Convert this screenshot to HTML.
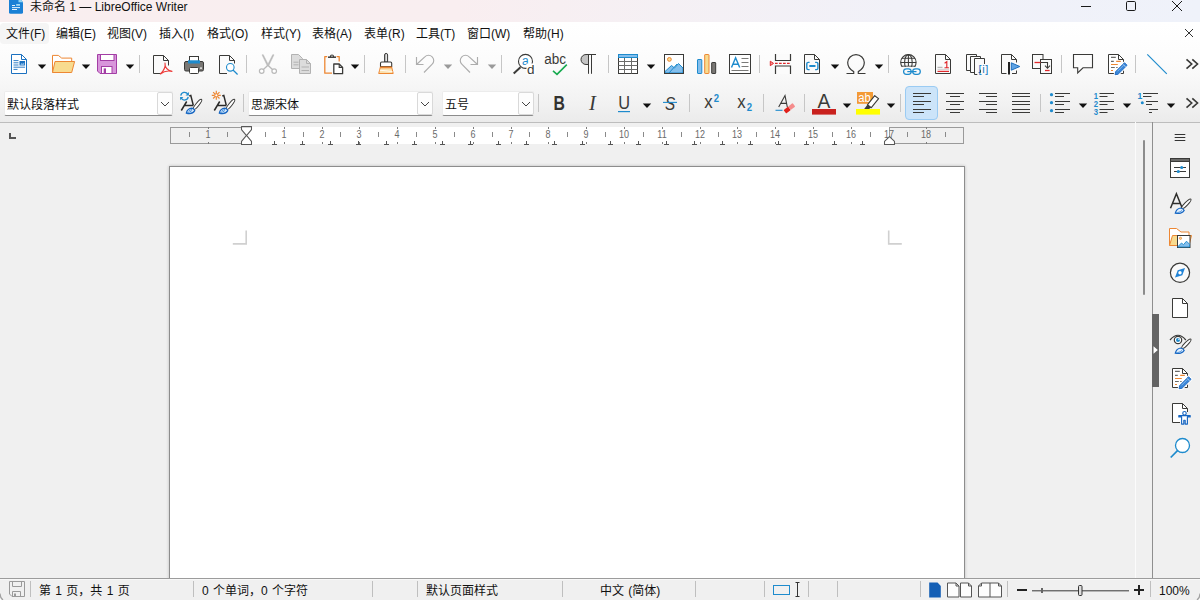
<!DOCTYPE html>
<html lang="zh-CN"><head><meta charset="utf-8"><title>未命名 1 — LibreOffice Writer</title>
<style>
html,body{margin:0;padding:0;}
body{width:1200px;height:600px;overflow:hidden;position:relative;background:#f0f0f0;
 font-family:"Liberation Sans","Noto Sans CJK SC",sans-serif;font-size:12px;color:#1a1a1a;}
.abs{position:absolute;}
#title{left:0;top:0;width:1200px;height:22px;background:linear-gradient(90deg,#f9eeef 0%,#f9eef0 38%,#f5f0f4 55%,#f1f1f8 75%,#eff2fa 100%);}
#bars{left:0;top:22px;width:1200px;height:100px;background:linear-gradient(180deg,#ffffff 0px,#fefefe 18px,#fcfcfc 36px,#f9f9f9 52px,#f6f6f6 64px,#f2f2f2 80px,#ebebeb 100px);}
#barline{left:0;top:122px;width:1200px;height:1px;background:#bdbdbd;}
.t{position:absolute;white-space:nowrap;line-height:16px;height:16px;}
.mi{position:absolute;top:26px;white-space:nowrap;line-height:16px;height:16px;font-size:12px;color:#111;}
svg{position:absolute;overflow:visible;}
.sep{position:absolute;width:1px;background:#c6c6c6;}
.st{position:absolute;top:583px;word-spacing:1px;white-space:nowrap;line-height:16px;height:16px;font-size:12px;color:#111;}
.ssep{position:absolute;top:581px;height:16px;width:1px;background:#bfbfbf;}
.rn{position:absolute;top:128px;width:20px;text-align:center;font-size:10px;transform:scaleX(.9);line-height:14px;color:#6a6a6a;}
</style></head>
<body>
<div id="title" class="abs"></div>
<svg style="left:9px;top:0" width="14" height="14" viewBox="0 0 14 14"><path d="M0 0H12.300L14 2.300V12.200a1.600 1.600 0 0 1-1.600 1.600H1.600A1.600 1.600 0 0 1 0 12.200z" fill="#1b80d5"/><path d="M9.500 0h2.800L14 2.300H9.500z" fill="#8fd3f4"/><rect x="3" y="5" width="3" height=".9" fill="#fff"/><rect x="7.200" y="4" width="3.800" height="1.800" fill="#9fd8f6"/><rect x="3" y="7.200" width="8" height=".9" fill="#fff"/><rect x="3" y="9.100" width="5" height=".9" fill="#fff"/></svg>
<div class="t" style="left:30px;top:-1px;font-size:12px;color:#111">未命名 1 — LibreOffice Writer</div>
<svg style="left:1076px;top:0" width="124" height="22" viewBox="0 0 124 22" fill="none" stroke="#1a1a1a" stroke-width="1"><path d="M5 6.5h10"/><rect x="50.5" y="1.5" width="9" height="9" rx="1.2"/><path d="M96 1l10 10M106 1l-10 10"/></svg>
<div id="bars" class="abs"></div><div id="barline" class="abs"></div>
<div class="abs" style="left:0;top:23px;width:49px;height:21px;background:#f5f5f5;border-radius:4px"></div>
<div class="mi" style="left:6px">文件(F)</div><div class="mi" style="left:56px">编辑(E)</div><div class="mi" style="left:107px">视图(V)</div><div class="mi" style="left:159px">插入(I)</div><div class="mi" style="left:207px">格式(O)</div><div class="mi" style="left:261px">样式(Y)</div><div class="mi" style="left:312px">表格(A)</div><div class="mi" style="left:364px">表单(R)</div><div class="mi" style="left:416px">工具(T)</div><div class="mi" style="left:467px">窗口(W)</div><div class="mi" style="left:523px">帮助(H)</div>
<svg style="left:1184px;top:28px" width="10" height="10" viewBox="0 0 10 10" stroke="#333" stroke-width="1" fill="none"><path d="M1 1l8 8M9 1l-8 8"/></svg>
<svg style="left:7px;top:52px" width="24" height="24" viewBox="0 0 24 24" ><path d="M4.5 2.5h10l5 5v14h-15z" fill="#fff" stroke="#1c71c0"/><path d="M14.5 2.5v5h5" fill="none" stroke="#1c71c0"/><path d="M6.500 8.600h5M6.500 10.800h5M6.500 13h5M6.500 15.200h11.500M6.500 17.400h4" stroke="#1c71c0" stroke-width=".9" fill="none"/><rect x="12.500" y="9" width="5.500" height="4.500" fill="#1c71c0"/><path d="M13.300 12.800l1.500-1.700 1 .9 1.400-1.400v2.200z" fill="#9cc8ee"/></svg>
<svg style="left:37px;top:64px" width="10" height="6" viewBox="0 0 10 6"><path d="M0.8 0.4h8.4L5 5z" fill="#111"/></svg>
<svg style="left:51px;top:52px" width="24" height="24" viewBox="0 0 24 24" ><path d="M1.500 20.500V3.400h5.800l3.400 2.700h10v3.400" fill="#fff" stroke="#ed8733" stroke-linejoin="round"/><path d="M4 9.500H23.600L20.700 20.500H1.500z" fill="#f8db8f" stroke="#ed8733" stroke-linejoin="round"/></svg>
<svg style="left:81px;top:64px" width="10" height="6" viewBox="0 0 10 6"><path d="M0.8 0.4h8.4L5 5z" fill="#111"/></svg>
<svg style="left:95px;top:52px" width="24" height="24" viewBox="0 0 24 24" ><path d="M2.5 2.5h19v19H5l-2.5-2.5z" fill="#d896db" stroke="#a33ea5"/><rect x="5.5" y="2.5" width="13.5" height="6" fill="#fff" stroke="#a33ea5"/><rect x="6.5" y="14.5" width="10.5" height="7" fill="#fff" stroke="#a33ea5"/><rect x="8.7" y="16.4" width="2.3" height="5" fill="#a33ea5"/></svg>
<svg style="left:125px;top:64px" width="10" height="6" viewBox="0 0 10 6"><path d="M0.8 0.4h8.4L5 5z" fill="#111"/></svg>
<div class="sep" style="left:139px;top:55px;height:18px"></div>
<svg style="left:149px;top:52px" width="24" height="24" viewBox="0 0 24 24" ><path d="M12 21.500H4.500v-18h10l5 5v5" fill="#fafafa" stroke="#3a3a38"/><path d="M14.500 3.500v5h5" fill="none" stroke="#3a3a38"/><path d="M16 11c.6 3.5-1 7.5-4.6 11M16 11c-.2 4 2.5 7.3 7 8.400M11.400 22c3.200-2.600 7.100-3.700 11.600-2.600" fill="none" stroke="#ed3d3b" stroke-width="1.100" stroke-linecap="round"/></svg>
<svg style="left:182px;top:52px" width="24" height="24" viewBox="0 0 24 24" ><rect x="2.500" y="9.500" width="19" height="9.500" rx="1.500" fill="#797774" stroke="#3a3a38"/><rect x="7.500" y="4.500" width="9" height="5" fill="#fff" stroke="#3a3a38"/><rect x="6" y="8.300" width="12" height="3.200" fill="#1e8bcd"/><rect x="7.500" y="15.500" width="9" height="6" rx="1" fill="#fff" stroke="#3a3a38"/><rect x="18" y="15.500" width="2" height="1.200" fill="#fff"/></svg>
<svg style="left:215px;top:52px" width="24" height="24" viewBox="0 0 24 24" ><path d="M12 21.500H4.500v-18h10l5 5v3" fill="#fafafa" stroke="#3a3a38"/><path d="M14.500 3.500v5h5" fill="none" stroke="#3a3a38"/><circle cx="15.300" cy="15.300" r="3.800" fill="#fff" stroke="#1e8bcd" stroke-width="1.100"/><path d="M18 18l4.600 4.500" stroke="#1e8bcd" stroke-width="1.200"/></svg>
<div class="sep" style="left:246px;top:55px;height:18px"></div>
<svg style="left:256px;top:52px" width="24" height="24" viewBox="0 0 24 24" ><path d="M6 2.800L7.300 2.700 12.600 13.300 11.300 13.800zM18 2.800L16.700 2.700 11.400 13.300 12.700 13.800z" fill="#b9b9b9" stroke="#b9b9b9" stroke-width=".5"/><path d="M11.900 13.200L16.500 17.500M11.900 13.200L7.400 17.500" stroke="#b9b9b9" stroke-width="1.300" fill="none"/><circle cx="5.700" cy="19.100" r="2.300" fill="#fff" stroke="#b9b9b9" stroke-width="1.200"/><circle cx="18.200" cy="19.100" r="2.300" fill="#fff" stroke="#b9b9b9" stroke-width="1.200"/></svg>
<svg style="left:289px;top:52px" width="24" height="24" viewBox="0 0 24 24" ><path d="M2.500 2.500h7l4 4v10h-11z" fill="#dcdcdc" stroke="#b2b2b2"/><path d="M4.500 10.200h5M4.500 12.800h5" stroke="#b2b2b2"/><path d="M10.500 7.500h7l4 4v10h-11z" fill="#dcdcdc" stroke="#b2b2b2"/><path d="M17.500 7.500v4h4" fill="none" stroke="#b2b2b2"/><path d="M12.500 15h7.500M12.500 18.500h7.500" stroke="#b2b2b2"/></svg>
<svg style="left:321px;top:52px" width="24" height="24" viewBox="0 0 24 24" ><path d="M6.200 4.600H3.800V21.200H11M15.600 4.600H18.200V9.500" fill="none" stroke="#ed8733" stroke-width="1.300" stroke-linejoin="round"/><path d="M9.400 4.900a1.600 1.900 0 0 1 3.200 0" fill="#fff" stroke="#3a3a38" stroke-width="1.100"/><path d="M7 5.200h8" stroke="#3a3a38" stroke-width="1.500"/><path d="M12.800 12h5.400l3.400 3.400v6.300h-8.800z" fill="#fff" stroke="#3a3a38" stroke-width="1.300" stroke-linejoin="round"/><path d="M18.200 12v3.400h3.400" fill="none" stroke="#3a3a38" stroke-width="1.100"/></svg>
<svg style="left:350px;top:64px" width="10" height="6" viewBox="0 0 10 6"><path d="M0.8 0.4h8.4L5 5z" fill="#111"/></svg>
<div class="sep" style="left:364px;top:55px;height:18px"></div>
<svg style="left:373.5px;top:52px" width="24" height="24" viewBox="0 0 24 24" ><defs><linearGradient id="hg" x1="0" x2="1"><stop offset="0" stop-color="#8a8a8a"/><stop offset=".55" stop-color="#f4f4f4"/><stop offset="1" stop-color="#9a9a9a"/></linearGradient></defs><path d="M10.600 10V3a1.500 1.600 0 0 1 3 0v7z" fill="url(#hg)" stroke="#3a3a38"/><path d="M6.500 14.500V11.200q0-1.200 1.200-1.200h8.800q1.200 0 1.200 1.200V14.500z" fill="#fff" stroke="#3a3a38" stroke-width="1.100"/><path d="M6.400 15h11.300l1.500 6.500H4.700z" fill="#fbe0ad" stroke="#ed8733" stroke-linejoin="round"/><path d="M6.300 15.600h11.500" stroke="#ed8733" stroke-width="1.400"/><path d="M5.800 18.200l12.600 1.300" stroke="#fff" stroke-width=".9"/></svg>
<div class="sep" style="left:405px;top:55px;height:18px"></div>
<svg style="left:413px;top:52px" width="24" height="24" viewBox="0 0 24 24" ><path d="M3.500 5v7.500h7M3.500 12.500L11.800 4.800A5.200 5.200 0 0 1 19.200 12.200L11 20.500" fill="none" stroke="#adadad" stroke-width="1.150"/></svg>
<svg style="left:443px;top:64px" width="10" height="6" viewBox="0 0 10 6"><path d="M0.8 0.4h8.4L5 5z" fill="#9a9a9a"/></svg>
<svg style="left:457px;top:52px" width="24" height="24" viewBox="0 0 24 24" ><g transform="translate(24,0) scale(-1,1)"><path d="M3.500 5v7.500h7M3.500 12.500L11.800 4.800A5.200 5.200 0 0 1 19.200 12.200L11 20.500" fill="none" stroke="#adadad" stroke-width="1.150"/></g></svg>
<svg style="left:487px;top:64px" width="10" height="6" viewBox="0 0 10 6"><path d="M0.8 0.4h8.4L5 5z" fill="#9a9a9a"/></svg>
<div class="sep" style="left:501px;top:55px;height:18px"></div>
<svg style="left:511px;top:52px" width="24" height="24" viewBox="0 0 24 24" ><circle cx="14.500" cy="9.400" r="7" fill="#fff" stroke="#3a3a38" stroke-width="1.100"/><path d="M9.500 15.200L2.700 21.400" stroke="#3a3a38" stroke-width="2"/><text x="11" y="12.700" font-family="Liberation Sans, sans-serif" font-size="12" fill="#1e8bcd">a</text><rect x="15.500" y="11.500" width="9" height="11" fill="#fff"/><text x="16" y="22" font-family="Liberation Sans, sans-serif" font-size="13.500" fill="#3a3a38">d</text></svg>
<svg style="left:544px;top:52px" width="24" height="24" viewBox="0 0 24 24" ><text x="0.300" y="11.800" font-family="Liberation Sans, sans-serif" font-size="14" fill="#3a3a38" textLength="21.800" lengthAdjust="spacingAndGlyphs">abc</text><path d="M9 18.800l4 3.500 9.800-9.700" fill="none" stroke="#18ab50" stroke-width="1.600"/></svg>
<svg style="left:576px;top:52px" width="24" height="24" viewBox="0 0 24 24" ><path d="M12.500 2.500H10a5 5 0 0 0 0 10h2.500z" fill="#c4c4c4" stroke="#3a3a38"/><path d="M12.500 2.500v19.300M15.500 2.500v19.300M10 2.500h10" fill="none" stroke="#3a3a38" stroke-width="1"/></svg>
<div class="sep" style="left:608px;top:55px;height:18px"></div>
<svg style="left:616px;top:52px" width="24" height="24" viewBox="0 0 24 24" ><rect x="2.500" y="2.500" width="19" height="19" fill="#fff" stroke="#3a3a38"/><path d="M2.500 9.500h19M2.500 13.500h19M2.500 17.500h19M8.500 5.500v16M15.500 5.500v16" stroke="#6b6b69" fill="none"/><rect x="2.500" y="2.500" width="19" height="3" fill="#83beec" stroke="#1e8bcd"/></svg>
<svg style="left:646px;top:64px" width="10" height="6" viewBox="0 0 10 6"><path d="M0.8 0.4h8.4L5 5z" fill="#111"/></svg>
<svg style="left:662px;top:52px" width="24" height="24" viewBox="0 0 24 24" ><rect x="2.500" y="2.500" width="19" height="19" fill="#fff" stroke="#3a3a38"/><circle cx="7.400" cy="7.400" r="1.900" fill="#f8db8f" stroke="#ed8733"/><path d="M3 19.500l6.500-6 3 2.500 4-4.500 4.500 4.500v5h-18z" fill="#83beec" stroke="#1e8bcd" stroke-linejoin="round"/><path d="M7 21l8-9" stroke="#1e8bcd" fill="none"/><rect x="2.500" y="2.500" width="19" height="19" fill="none" stroke="#3a3a38"/></svg>
<svg style="left:694px;top:52px" width="24" height="24" viewBox="0 0 24 24" ><rect x="3.500" y="7.500" width="4.300" height="14" rx=".5" fill="#83beec" stroke="#1e8bcd"/><rect x="10.700" y="2.500" width="4.300" height="19" rx=".5" fill="#f8db8f" stroke="#ed8733"/><rect x="17.700" y="10.500" width="4" height="11" rx=".5" fill="#797774" stroke="#3a3a38"/></svg>
<svg style="left:728px;top:52px" width="24" height="24" viewBox="0 0 24 24" ><rect x="1.500" y="2.500" width="21" height="19" fill="#fff" stroke="#3a3a38"/><path d="M3.500 15.500L7.600 5.800l4.100 9.700M5 12.300h5.200" fill="none" stroke="#1e8bcd" stroke-width="1.450"/><path d="M13.500 6.500h7M13.500 10.500h7M13.500 14.500h7M3.500 18.500h17" stroke="#7a7a78" fill="none"/></svg>
<div class="sep" style="left:759px;top:55px;height:18px"></div>
<svg style="left:768px;top:52px" width="24" height="24" viewBox="0 0 24 24" ><path d="M7.500 2v6.500h15V2z" fill="#fbfbfb" stroke="none"/><path d="M7.500 22v-8h15v8z" fill="#fbfbfb" stroke="none"/><path d="M7.500 2v6.500h15V2M7.500 22v-8h15v8" fill="none" stroke="#3a3a38" stroke-width="1.200"/><path d="M7 11.400h16" stroke="#e0282c" stroke-width="1.300" stroke-dasharray="2.700 1.300" fill="none"/><path d="M2.300 9.200l3.200 2.200-3.200 2.300z" fill="#f29a9a" stroke="#e0282c" stroke-width="1"/></svg>
<svg style="left:800px;top:52px" width="24" height="24" viewBox="0 0 24 24" ><path d="M4.5 2.5h10l5 5v14h-15z" fill="#fafafa" stroke="#3a3a38"/><path d="M14.5 2.5v5h5" fill="none" stroke="#3a3a38"/><path d="M9.600 10.400H8.200a1.400 1.400 0 0 0-1.400 1.400v4.400a1.400 1.400 0 0 0 1.400 1.400h1.400M15.100 10.400h1.400a1.400 1.400 0 0 1 1.400 1.400v4.400a1.400 1.400 0 0 1-1.400 1.400h-1.400" fill="none" stroke="#1e8bcd" stroke-width="1.400"/><path d="M9.300 14h6.200" stroke="#1e8bcd" stroke-width="2"/></svg>
<svg style="left:830px;top:64px" width="10" height="6" viewBox="0 0 10 6"><path d="M0.8 0.4h8.4L5 5z" fill="#111"/></svg>
<svg style="left:844px;top:52px" width="24" height="24" viewBox="0 0 24 24" ><path d="M2.500 21.500H9.700V19.600C5.700 17.500 3.700 14.200 3.700 10.600A8.300 8 0 0 1 20.300 10.600C20.300 14.200 18.300 17.500 14.300 19.600V21.500H21.500" fill="none" stroke="#3a3a38" stroke-width="1.200"/></svg>
<svg style="left:874px;top:64px" width="10" height="6" viewBox="0 0 10 6"><path d="M0.8 0.4h8.4L5 5z" fill="#111"/></svg>
<div class="sep" style="left:888px;top:55px;height:18px"></div>
<svg style="left:898px;top:52px" width="24" height="24" viewBox="0 0 24 24" ><clipPath id="gc"><rect x="0" y="0" width="24" height="14.800"/></clipPath><g clip-path="url(#gc)" fill="none" stroke="#3a3a38" stroke-width="1.050"><circle cx="10.400" cy="10.300" r="7.700"/><ellipse cx="10.400" cy="10.300" rx="3.800" ry="7.700"/><path d="M10.400 2.500v12M3.800 6.200h13.200M2.700 10.500h15.400M3.300 14.300h14.200"/></g><rect x="5.600" y="16.800" width="7.600" height="5.600" rx="2.800" fill="none" stroke="#1e8bcd" stroke-width="1.250"/><rect x="14.700" y="16.800" width="7.600" height="5.600" rx="2.800" fill="none" stroke="#1e8bcd" stroke-width="1.250"/><path d="M9.300 19.600h9.200" stroke="#1e8bcd" stroke-width="1.250"/></svg>
<svg style="left:931px;top:52px" width="24" height="24" viewBox="0 0 24 24" ><path d="M4.5 2.5h10l5 5v14h-15z" fill="#fafafa" stroke="#3a3a38"/><path d="M14.5 2.5v5h5" fill="none" stroke="#3a3a38"/><path d="M6.500 15.300h5" stroke="#a8a8a8"/><path d="M6.500 17.300h11.500" stroke="#cdcdcd"/><path d="M6.500 19.400h11.500" stroke="#e0282c" stroke-width="1.200"/><path d="M13.600 11.200l2.200-1.500v6M13.500 15.700h4.400" fill="none" stroke="#e0282c" stroke-width="1.150"/></svg>
<svg style="left:965px;top:52px" width="24" height="24" viewBox="0 0 24 24" ><path d="M1.500 2.500h10v16h-10z" fill="#fafafa" stroke="#3a3a38" stroke-linejoin="round"/><path d="M5.500 4.500h10v16h-10z" fill="#fafafa" stroke="#3a3a38" stroke-linejoin="round"/><path d="M12.300 22.500H9.500v-16h10v5.500" fill="#fafafa" stroke="#3a3a38" stroke-linejoin="round"/><text x="13.400" y="21" font-family="Liberation Sans, sans-serif" font-size="11" fill="#1479c4" textLength="10" lengthAdjust="spacing">[i]</text></svg>
<svg style="left:997px;top:52px" width="24" height="24" viewBox="0 0 24 24" ><path d="M9.500 21.500h-5v-19h10l5 5v3M15 21.500h4.500v-3" fill="#fafafa" stroke="#3a3a38"/><path d="M14.500 2.500v5h5" fill="none" stroke="#3a3a38"/><path d="M12 10v12.500" stroke="#222" stroke-width="2"/><path d="M14.300 10.800l8.500 3.700-8.500 3.700z" fill="#5fa3e4" stroke="#1e6fbf" stroke-linejoin="round"/></svg>
<svg style="left:1030px;top:52px" width="24" height="24" viewBox="0 0 24 24" ><rect x="2.500" y="2.500" width="10.500" height="14" fill="#fafafa" stroke="#3a3a38"/><rect x="10.500" y="7.500" width="11" height="14" fill="#fafafa" stroke="#3a3a38"/><path d="M4.500 10.500h6" stroke="#e0282c" stroke-width="1.300"/><path d="M15 18.500h4.600" stroke="#e0282c" stroke-width="1.300"/><path d="M11 10.500h6.500v5.500M15 13.700l2.500 2.600 2.500-2.600" fill="none" stroke="#3a3a38" stroke-width="1.100"/></svg>
<div class="sep" style="left:1061px;top:55px;height:18px"></div>
<svg style="left:1071px;top:52px" width="24" height="24" viewBox="0 0 24 24" ><path d="M2.500 2.500h19v13.300H12L6.700 21V15.800H2.500z" fill="#fcfcfc" stroke="#3a3a38" stroke-width="1.100"/></svg>
<svg style="left:1104px;top:52px" width="24" height="24" viewBox="0 0 24 24" ><path d="M4.5 2.5h10l5 5v14h-15z" fill="#fff" stroke="#3a3a38"/><path d="M14.5 2.5v5h5" fill="none" stroke="#3a3a38"/><path d="M7 5.400h4.800M7 9.400h2.800M7 15.500h3.800M12.200 15.500h1.600" stroke="#6a6a68" stroke-width="1.100"/><path d="M12.200 9.400h4.600M7 12.500h6.800M7 18.500h2" stroke="#ed8733" stroke-width="1.100"/><path d="M20.500 10.700L23.100 13.300 14 22.300l-2.900.4.500-3z" fill="#fff" stroke="#fff" stroke-width="2.800" stroke-linejoin="round"/><path d="M20.500 10.700L23.100 13.300 14 22.300l-2.900.4.500-3z" fill="#3a86d8" stroke="#1a67c1" stroke-width=".9" stroke-linejoin="round"/><path d="M19 12.300l2.600 2.600" stroke="#cfe3f6" stroke-width=".8"/><path d="M13.500 19.300l6-6" stroke="#8fbdea" stroke-width=".9"/></svg>
<div class="sep" style="left:1135px;top:55px;height:18px"></div>
<svg style="left:1145px;top:52px" width="24" height="24" viewBox="0 0 24 24" ><path d="M2.300 2.300l19.500 19.500" stroke="#1e8bcd" stroke-width="1.150"/></svg>
<svg style="left:1185px;top:58px" width="14" height="12" viewBox="0 0 14 12" fill="none" stroke="#3a3a38" stroke-width="1.650"><path d="M1.500 1.300l5.200 4.700-5.200 4.700M7.300 1.300l5.200 4.700-5.200 4.700"/></svg>
<div class="abs" style="left:4px;top:91px;width:169px;height:25px;box-sizing:border-box;background:#fff;border:1px solid #ececec;border-bottom:1px solid #8c8c8c;border-radius:2px"></div>
<div class="abs" style="left:157px;top:92px;width:16px;height:23px;box-sizing:border-box;background:#fdfdfd;border:1px solid #d9d9d9;border-radius:2px"></div>
<svg style="left:160px;top:101px" width="10" height="6" viewBox="0 0 10 6" fill="none" stroke="#444" stroke-width="1"><path d="M1 1l4 4 4-4"/></svg>
<div class="t" style="left:7px;top:97px;font-size:12px;color:#111">默认段落样式</div>
<svg style="left:179px;top:91px" width="24" height="24" viewBox="0 0 24 24" ><path d="M2.300 19.500L7.700 10.500M5.600 14.400h8.700M10.300 5l1.500-.6 2.500 10" fill="none" stroke="#2a2a29" stroke-width="1.500" stroke-linejoin="miter"/><ellipse cx="18.500" cy="13.500" rx="6.500" ry="1.600" transform="rotate(-51 18.500 13.500)" fill="#fff" stroke="#3a3a38" stroke-width="1"/><path d="M7.300 22.100c.5-2.500 3-4.600 5.600-4.900 1.500.4 2.600 1.300 2.900 2.400-1.500 2.400-5.100 3.500-8.500 2.500z" fill="#e2effb" stroke="#1766c2" stroke-width="1.200"/><path d="M8 21.800c2-.3 3.800-1.200 5.200-2.600M9.500 20.300c1-.9 2.200-1.600 3.600-2" fill="none" stroke="#3d8ad9" stroke-width=".9"/><g fill="none" stroke="#1e8bcd" stroke-width="1.300"><path d="M1.800 4.600a3.800 3.800 0 0 1 7-1.400M9.200 5.800a3.800 3.800 0 0 1-7 1.400"/></g><path d="M9.900 1.100v3.300H6.600zM1.100 9.300V6h3.300z" fill="#1e8bcd"/></svg>
<svg style="left:212px;top:91px" width="24" height="24" viewBox="0 0 24 24" ><path d="M2.300 19.500L7.700 10.500M5.600 14.400h8.700M10.300 5l1.500-.6 2.500 10" fill="none" stroke="#2a2a29" stroke-width="1.500" stroke-linejoin="miter"/><ellipse cx="18.500" cy="13.500" rx="6.500" ry="1.600" transform="rotate(-51 18.500 13.500)" fill="#fff" stroke="#3a3a38" stroke-width="1"/><path d="M7.300 22.100c.5-2.500 3-4.600 5.600-4.900 1.500.4 2.600 1.300 2.900 2.400-1.500 2.400-5.100 3.500-8.500 2.500z" fill="#e2effb" stroke="#1766c2" stroke-width="1.200"/><path d="M8 21.800c2-.3 3.800-1.200 5.200-2.600M9.500 20.300c1-.9 2.200-1.600 3.600-2" fill="none" stroke="#3d8ad9" stroke-width=".9"/><g stroke="#ed8733" stroke-width="1.150" fill="none"><path d="M4.300 -.2v9M-.2 4.300h9M1.100 1.100l6.400 6.400M7.500 1.100L1.100 7.500"/></g><circle cx="4.300" cy="4.300" r="1.500" fill="#fff" stroke="#ed8733" stroke-width=".9"/></svg>
<div class="sep" style="left:243px;top:94px;height:18px"></div>
<div class="abs" style="left:248px;top:91px;width:185px;height:25px;box-sizing:border-box;background:#fff;border:1px solid #ececec;border-bottom:1px solid #8c8c8c;border-radius:2px"></div>
<div class="abs" style="left:417px;top:92px;width:16px;height:23px;box-sizing:border-box;background:#fdfdfd;border:1px solid #d9d9d9;border-radius:2px"></div>
<svg style="left:420px;top:101px" width="10" height="6" viewBox="0 0 10 6" fill="none" stroke="#444" stroke-width="1"><path d="M1 1l4 4 4-4"/></svg>
<div class="t" style="left:251px;top:97px;font-size:12px;color:#111">思源宋体</div>
<div class="abs" style="left:442px;top:91px;width:92px;height:25px;box-sizing:border-box;background:#fff;border:1px solid #ececec;border-bottom:1px solid #8c8c8c;border-radius:2px"></div>
<div class="abs" style="left:518px;top:92px;width:16px;height:23px;box-sizing:border-box;background:#fdfdfd;border:1px solid #d9d9d9;border-radius:2px"></div>
<svg style="left:521px;top:101px" width="10" height="6" viewBox="0 0 10 6" fill="none" stroke="#444" stroke-width="1"><path d="M1 1l4 4 4-4"/></svg>
<div class="t" style="left:445px;top:97px;font-size:12px;color:#111">五号</div>
<div class="sep" style="left:538px;top:94px;height:18px"></div>
<svg style="left:547px;top:91px" width="24" height="24" viewBox="0 0 24 24" ><text x="6.4" y="19" font-family="Liberation Sans, sans-serif" font-size="20.3" font-weight="bold" font-style="normal" fill="#333331" textLength="11.4" lengthAdjust="spacingAndGlyphs">B</text></svg>
<svg style="left:581px;top:91px" width="24" height="24" viewBox="0 0 24 24" ><text x="8" y="19" font-family="Liberation Serif, serif" font-size="20.5" font-weight="normal" font-style="italic" fill="#3a3a38">I</text></svg>
<svg style="left:612px;top:91px" width="24" height="24" viewBox="0 0 24 24" ><text x="6.2" y="18" font-family="Liberation Sans, sans-serif" font-size="17.8" font-weight="normal" font-style="normal" fill="#3a3a38" textLength="11.8" lengthAdjust="spacingAndGlyphs">U</text><path d="M6 20.600h12" stroke="#1e8bcd" stroke-width="1.200"/></svg>
<svg style="left:642px;top:103px" width="10" height="6" viewBox="0 0 10 6"><path d="M0.8 0.4h8.4L5 5z" fill="#111"/></svg>
<svg style="left:658px;top:91px" width="24" height="24" viewBox="0 0 24 24" ><text x="7" y="18.7" font-family="Liberation Sans, sans-serif" font-size="18.5" font-weight="normal" font-style="italic" fill="#3a3a38" textLength="10.2" lengthAdjust="spacingAndGlyphs">S</text><path d="M5 11.400h14" stroke="#1e8bcd" stroke-width="1.100"/></svg>
<div class="sep" style="left:689px;top:94px;height:18px"></div>
<svg style="left:700px;top:91px" width="24" height="24" viewBox="0 0 24 24" ><text x="4.2" y="16.8" font-family="Liberation Sans, sans-serif" font-size="17.8" font-weight="normal" font-style="normal" fill="#3a3a38" textLength="8.4" lengthAdjust="spacingAndGlyphs">x</text><text x="13.7" y="10.7" font-family="Liberation Sans, sans-serif" font-size="10.5" font-weight="bold" font-style="normal" fill="#1e8bcd" textLength="5.3" lengthAdjust="spacingAndGlyphs">2</text></svg>
<svg style="left:732.5px;top:91px" width="24" height="24" viewBox="0 0 24 24" ><text x="4.2" y="16.8" font-family="Liberation Sans, sans-serif" font-size="17.8" font-weight="normal" font-style="normal" fill="#3a3a38" textLength="8.4" lengthAdjust="spacingAndGlyphs">x</text><text x="13.7" y="20.2" font-family="Liberation Sans, sans-serif" font-size="10.5" font-weight="bold" font-style="normal" fill="#1e8bcd" textLength="5.3" lengthAdjust="spacingAndGlyphs">2</text></svg>
<div class="sep" style="left:763px;top:94px;height:18px"></div>
<svg style="left:772.5px;top:91px" width="24" height="24" viewBox="0 0 24 24" ><path d="M5.700 16L12 4.600l2.300 11.400M7.700 12.400h5.800" fill="none" stroke="#3a3a38" stroke-width="1.100"/><path d="M2.500 19.300h7" stroke="#1e8bcd" stroke-width="1.100"/><g transform="translate(16.400,17.300) rotate(-38)"><rect x="-5.700" y="-2.200" width="5.700" height="4.400" rx=".7" fill="#e0201b"/><rect x="0" y="-2.200" width="5.700" height="4.400" rx=".7" fill="#f58c8c"/></g></svg>
<div class="sep" style="left:804px;top:94px;height:18px"></div>
<svg style="left:812px;top:91px" width="24" height="24" viewBox="0 0 24 24" ><text x="5.6" y="16.8" font-family="Liberation Sans, sans-serif" font-size="20.3" font-weight="normal" font-style="normal" fill="#3a3a38" textLength="12.8" lengthAdjust="spacingAndGlyphs">A</text><rect x="0" y="18" width="24" height="5.600" fill="#c9211e"/></svg>
<svg style="left:842px;top:103px" width="10" height="6" viewBox="0 0 10 6"><path d="M0.8 0.4h8.4L5 5z" fill="#111"/></svg>
<svg style="left:856px;top:91px" width="24" height="24" viewBox="0 0 24 24" ><rect x="1" y="1" width="16" height="11.800" fill="#f39a36"/><text x="2.2" y="10.8" font-family="Liberation Sans, sans-serif" font-size="12" font-weight="normal" font-style="normal" fill="#fff" textLength="12.5" lengthAdjust="spacingAndGlyphs">ab</text><path d="M18.700 4.700l3.900 2.900-7.300 9-3.900-2.800z" fill="#fff" stroke="#3a3a38" stroke-width="1.100" stroke-linejoin="round"/><path d="M11.400 13.800l3.900 2.800-2.300 1.500h-4.800z" fill="#3a3a38"/><rect x="0" y="18" width="24" height="5.600" fill="#ffff00"/></svg>
<svg style="left:886px;top:103px" width="10" height="6" viewBox="0 0 10 6"><path d="M0.8 0.4h8.4L5 5z" fill="#111"/></svg>
<div class="sep" style="left:900px;top:94px;height:18px"></div>
<div class="abs" style="left:905px;top:86px;width:33px;height:34px;box-sizing:border-box;background:#cce4f9;border:1px solid #9acbf3;border-radius:4px"></div>
<svg style="left:910px;top:91px" width="24" height="24" viewBox="0 0 24 24" ><path d="M3 2.5H21M3 5.5H14M3 10.5H21M3 13.5H14M3 18.5H21M3 21.5H14" stroke="#3a3a38" stroke-width="1.100" fill="none"/></svg>
<svg style="left:943px;top:91px" width="24" height="24" viewBox="0 0 24 24" ><path d="M3 2.5H21M7 5.5H17M3 10.5H21M7 13.5H17M3 18.5H21M7 21.5H17" stroke="#3a3a38" stroke-width="1.100" fill="none"/></svg>
<svg style="left:976px;top:91px" width="24" height="24" viewBox="0 0 24 24" ><path d="M3 2.5H21M10 5.5H21M3 10.5H21M10 13.5H21M3 18.5H21M10 21.5H21" stroke="#3a3a38" stroke-width="1.100" fill="none"/></svg>
<svg style="left:1009px;top:91px" width="24" height="24" viewBox="0 0 24 24" ><path d="M3 2.5H21M3 5.5H21M3 10.5H21M3 13.5H21M3 18.5H21M3 21.5H21" stroke="#3a3a38" stroke-width="1.100" fill="none"/></svg>
<div class="sep" style="left:1040px;top:94px;height:18px"></div>
<svg style="left:1048px;top:91px" width="24" height="24" viewBox="0 0 24 24" ><path d="M7 2.5H22M7 5.5H16M7 10.5H22M7 13.5H16M7 18.5H22M7 21.5H16" stroke="#3a3a38" stroke-width="1.100" fill="none"/><circle cx="3.500" cy="3.7" r="1.600" fill="#1e8bcd"/><circle cx="3.500" cy="11.7" r="1.600" fill="#1e8bcd"/><circle cx="3.500" cy="19.7" r="1.600" fill="#1e8bcd"/></svg>
<svg style="left:1078px;top:103px" width="10" height="6" viewBox="0 0 10 6"><path d="M0.8 0.4h8.4L5 5z" fill="#111"/></svg>
<svg style="left:1092px;top:91px" width="24" height="24" viewBox="0 0 24 24" ><path d="M7.5 2.5H22M7.5 5.5H15.5M7.5 10.5H22M7.5 13.5H15.5M7.5 18.5H22M7.5 21.5H15.5" stroke="#3a3a38" stroke-width="1.100" fill="none"/><text x="1.7" y="7.8" font-family="Liberation Sans, sans-serif" font-size="9.5" font-weight="bold" font-style="normal" fill="#1e8bcd" textLength="4.3" lengthAdjust="spacingAndGlyphs">1</text><text x="1.7" y="16" font-family="Liberation Sans, sans-serif" font-size="9.5" font-weight="bold" font-style="normal" fill="#1e8bcd" textLength="4.3" lengthAdjust="spacingAndGlyphs">2</text><text x="1.7" y="23.9" font-family="Liberation Sans, sans-serif" font-size="9.5" font-weight="bold" font-style="normal" fill="#1e8bcd" textLength="4.3" lengthAdjust="spacingAndGlyphs">3</text></svg>
<svg style="left:1122px;top:103px" width="10" height="6" viewBox="0 0 10 6"><path d="M0.8 0.4h8.4L5 5z" fill="#111"/></svg>
<svg style="left:1136px;top:91px" width="24" height="24" viewBox="0 0 24 24" ><path d="M7 2.5H22M7 5.5H15.5M10 10.5H22M10 13.5H16M13 18.5H22M13 21.5H16" stroke="#3a3a38" stroke-width="1.100" fill="none"/><text x="1.6" y="7.6" font-family="Liberation Sans, sans-serif" font-size="8.5" font-weight="bold" font-style="normal" fill="#1e8bcd">1</text><circle cx="6.300" cy="11.700" r="1.500" fill="#1e8bcd"/></svg>
<svg style="left:1166px;top:103px" width="10" height="6" viewBox="0 0 10 6"><path d="M0.8 0.4h8.4L5 5z" fill="#111"/></svg>
<svg style="left:1185px;top:97px" width="14" height="12" viewBox="0 0 14 12" fill="none" stroke="#3a3a38" stroke-width="1.650"><path d="M1.500 1.300l5.200 4.700-5.200 4.700M7.300 1.300l5.200 4.700-5.200 4.700"/></svg>
<svg style="left:9px;top:133px" width="8" height="6" viewBox="0 0 8 6"><path d="M0 0h2v4h5v2H0z" fill="#555"/></svg>
<div class="abs" style="left:170px;top:127px;width:77px;height:17px;box-sizing:border-box;border:1px solid #9a9a9a;border-right:none;background:#f0f0f0"></div>
<div class="abs" style="left:889px;top:127px;width:75px;height:17px;box-sizing:border-box;border:1px solid #9a9a9a;background:#f0f0f0"></div>
<div class="abs" style="left:247px;top:127px;width:642px;height:17px;background:#fff"></div>
<svg style="left:0;top:127px" width="1200" height="18" viewBox="0 0 1200 18"><path d="M189.5 5v5M227.5 5v5M265.5 5v5M303.5 5v5M340.5 5v5M378.5 5v5M416.5 5v5M454.5 5v5M492.5 5v5M529.5 5v5M567.5 5v5M605.5 5v5M643.5 5v5M681.5 5v5M718.5 5v5M756.5 5v5M794.5 5v5M832.5 5v5M870.5 5v5M907.5 5v5M945.5 5v5" stroke="#8a8a8a" stroke-width="1" fill="none"/><path d="M274.5 14v3.500M272.0 17.500h5M302.5 14v3.500M300.0 17.500h5M330.5 14v3.500M328.0 17.500h5M358.5 14v3.500M356.0 17.500h5M386.5 14v3.500M384.0 17.500h5M414.5 14v3.500M412.0 17.500h5M442.5 14v3.500M440.0 17.500h5M470.5 14v3.500M468.0 17.500h5M498.5 14v3.500M496.0 17.500h5M526.5 14v3.500M524.0 17.500h5M554.5 14v3.500M552.0 17.500h5M582.5 14v3.500M580.0 17.500h5M610.5 14v3.500M608.0 17.500h5M638.5 14v3.500M636.0 17.500h5M666.5 14v3.500M664.0 17.500h5M694.5 14v3.500M692.0 17.500h5M722.5 14v3.500M720.0 17.500h5M750.5 14v3.500M748.0 17.500h5M778.5 14v3.500M776.0 17.500h5M806.5 14v3.500M804.0 17.500h5M834.5 14v3.500M832.0 17.500h5M862.5 14v3.500M860.0 17.500h5" stroke="#555" stroke-width="1" fill="none"/><path d="M284.5 0v2M284.5 15v2M322.5 0v2M322.5 15v2M359.5 0v2M359.5 15v2M397.5 0v2M397.5 15v2M435.5 0v2M435.5 15v2M473.5 0v2M473.5 15v2M511.5 0v2M511.5 15v2M548.5 0v2M548.5 15v2M586.5 0v2M586.5 15v2M624.5 0v2M624.5 15v2M662.5 0v2M662.5 15v2M700.5 0v2M700.5 15v2M737.5 0v2M737.5 15v2M775.5 0v2M775.5 15v2M813.5 0v2M813.5 15v2M851.5 0v2M851.5 15v2M208.5 0v2M208.5 15v2M926.5 0v2M926.5 15v2" stroke="#7d7d7d" stroke-width="1" fill="none"/><path d="M241.500 -.4h10v3l-5 6-5-6zM241.500 17.400h10v-3l-5-6-5 6z" fill="#fff" stroke="#585858" stroke-width="1.050" stroke-linejoin="round"/><path d="M884.500 17.400v-3l5-4.800 5 4.800v3z" fill="#fff" stroke="#585858" stroke-width="1.050" stroke-linejoin="round"/></svg>
<div class="rn" style="left:198.2px">1</div><div class="rn" style="left:273.8px">1</div><div class="rn" style="left:311.6px">2</div><div class="rn" style="left:349.4px">3</div><div class="rn" style="left:387.2px">4</div><div class="rn" style="left:425.0px">5</div><div class="rn" style="left:462.8px">6</div><div class="rn" style="left:500.6px">7</div><div class="rn" style="left:538.4px">8</div><div class="rn" style="left:576.2px">9</div><div class="rn" style="left:614.0px">10</div><div class="rn" style="left:651.7px">11</div><div class="rn" style="left:689.5px">12</div><div class="rn" style="left:727.3px">13</div><div class="rn" style="left:765.1px">14</div><div class="rn" style="left:802.9px">15</div><div class="rn" style="left:840.7px">16</div><div class="rn" style="left:878.5px">17</div><div class="rn" style="left:916.3px">18</div>
<div class="abs" style="left:169px;top:166px;width:796px;height:420px;box-sizing:border-box;background:#fff;border:1px solid #8d8d8d;box-shadow:0 0 3px rgba(0,0,0,.22)"></div>
<svg style="left:0;top:0" width="1200" height="600" viewBox="0 0 1200 600" fill="none" stroke="#d0d0d0" stroke-width="1.600"><path d="M232.800 243.900H246.200V230.500M901.800 243.900H888.700V230.500"/></svg>
<div class="abs" style="left:1135px;top:122px;width:1px;height:456px;background:#fbfbfb"></div>
<div class="abs" style="left:1143px;top:140px;width:2px;height:155px;background:#8c8c8c;border-radius:1px"></div>
<div class="abs" style="left:1152px;top:122px;width:1px;height:456px;background:#8f8f8f"></div>
<div class="abs" style="left:1152px;top:314px;width:7px;height:73px;background:#646464"></div>
<svg style="left:1152px;top:345px" width="7" height="10" viewBox="0 0 7 10"><path d="M1.500 1.200L5.800 5 1.500 8.800z" fill="#fff"/></svg>
<svg style="left:1174px;top:133px" width="12" height="10" viewBox="0 0 12 10"><path d="M.700 1.500h10.600M.700 4.500h10.600M.700 7.500h10.600" stroke="#333" stroke-width="1"/></svg>
<svg style="left:1168px;top:156px" width="24" height="24" viewBox="0 0 24 24" ><rect x="2.500" y="2.500" width="19" height="19" fill="#fff" stroke="#3a3a38"/><rect x="2.500" y="2.500" width="19" height="3" fill="#6a6a68" stroke="#3a3a38"/><path d="M6 11.500h12M6 15.500h12" stroke="#3a3a38"/><circle cx="13.700" cy="11.500" r="1.600" fill="#1e8bcd"/><circle cx="10.300" cy="15.500" r="1.600" fill="#1e8bcd"/></svg>
<svg style="left:1168px;top:191px" width="24" height="24" viewBox="0 0 24 24" ><path d="M2.500 17.300L8.400 2.800 14.300 17.300M4.600 12.600h7.600" fill="none" stroke="#2e2e2c" stroke-width="1.500"/><ellipse cx="18.400" cy="12.800" rx="6.400" ry="1.600" transform="rotate(-46 18.400 12.800)" fill="#fff" stroke="#3a3a38" stroke-width="1"/><path d="M7.300 22.200c.6-2.600 3-4.800 5.200-5.200 1.700.3 3.200 1.200 3.700 2.400-1.300 2.500-5.200 3.700-8.900 2.800z" fill="#e2effb" stroke="#1766c2" stroke-width="1.200"/><path d="M8.200 21.800c2.200-.2 4.200-1 5.800-2.300" fill="none" stroke="#3d8ad9" stroke-width=".9"/></svg>
<svg style="left:1168px;top:226px" width="24" height="24" viewBox="0 0 24 24" ><path d="M1.500 19.500V2.500h7l4.500 3.500h8v3.500" fill="#fff" stroke="#ed8733" stroke-linejoin="round"/><path d="M4.500 9.500H23.500L21 19.500H1.500z" fill="#f8db8f" stroke="#ed8733" stroke-linejoin="round"/><rect x="9.500" y="9.500" width="12.500" height="12" fill="#fff" stroke="#3a3a38"/><circle cx="12.500" cy="12.300" r="1.100" fill="#f8db8f" stroke="#ed8733" stroke-width=".8"/><path d="M10 20.500l3.500-3.500 2 1.700 3-3.500 3 3v2.800h-11.500z" fill="#83beec" stroke="#1e8bcd" stroke-width=".9" stroke-linejoin="round"/></svg>
<svg style="left:1168px;top:261px" width="24" height="24" viewBox="0 0 24 24" ><circle cx="12" cy="11.800" r="9.600" fill="#fafafa" stroke="#3a3a38" stroke-width="1.200"/><path d="M17 7L14.300 14.300 7 16.600 9.700 9.300z" fill="#2183d6"/><circle cx="12" cy="11.800" r="1.700" fill="#fff"/></svg>
<svg style="left:1168px;top:296px" width="24" height="24" viewBox="0 0 24 24" ><path d="M4.5 2.5h10l5 5v14h-15z" fill="#fff" stroke="#3a3a38"/><path d="M14.5 2.5v5h5" fill="none" stroke="#3a3a38"/></svg>
<svg style="left:1168px;top:331px" width="24" height="24" viewBox="0 0 24 24" ><path d="M2 9Q10 -.5 17.800 9" fill="none" stroke="#3a3a38" stroke-width="1.200"/><circle cx="10" cy="9" r="3.700" fill="#fff" stroke="#3a3a38" stroke-width="1.200"/><circle cx="10" cy="9" r="2" fill="#1e8bcd"/><circle cx="10.900" cy="8.300" r=".7" fill="#fff"/><ellipse cx="18.400" cy="12.800" rx="6.400" ry="1.600" transform="rotate(-46 18.400 12.800)" fill="#fff" stroke="#3a3a38" stroke-width="1"/><path d="M7.300 22.200c.6-2.600 3-4.800 5.200-5.200 1.700.3 3.200 1.200 3.700 2.400-1.300 2.500-5.200 3.700-8.900 2.800z" fill="#e2effb" stroke="#1766c2" stroke-width="1.200"/><path d="M8.200 21.800c2.200-.2 4.200-1 5.800-2.300" fill="none" stroke="#3d8ad9" stroke-width=".9"/></svg>
<svg style="left:1168px;top:366px" width="24" height="24" viewBox="0 0 24 24" ><path d="M4.5 2.5h10l5 5v14h-15z" fill="#fff" stroke="#3a3a38"/><path d="M14.5 2.5v5h5" fill="none" stroke="#3a3a38"/><path d="M7 5.400h4.800M7 9.400h2.800M7 15.500h3.800M12.200 15.500h1.600" stroke="#6a6a68" stroke-width="1.100"/><path d="M12.200 9.400h4.600M7 12.500h6.800M7 18.500h2" stroke="#ed8733" stroke-width="1.100"/><path d="M20.500 10.700L23.100 13.300 14 22.300l-2.900.4.500-3z" fill="#fff" stroke="#fff" stroke-width="2.800" stroke-linejoin="round"/><path d="M20.500 10.700L23.100 13.300 14 22.300l-2.900.4.500-3z" fill="#3a86d8" stroke="#1a67c1" stroke-width=".9" stroke-linejoin="round"/><path d="M19 12.300l2.600 2.600" stroke="#cfe3f6" stroke-width=".8"/><path d="M13.500 19.300l6-6" stroke="#8fbdea" stroke-width=".9"/></svg>
<svg style="left:1168px;top:401px" width="24" height="24" viewBox="0 0 24 24" ><path d="M12 21.500H4.500v-19h10l5 5v3.500" fill="#fff" stroke="#3a3a38"/><path d="M14.500 2.500v5h5" fill="none" stroke="#3a3a38"/><path d="M10.800 14.600H22.200V15.900H19.400V23.100H17.200V19.200H15.800V23.100H13.600V15.900H10.800Z" fill="#fff" stroke="#1766c2" stroke-width="1.150" stroke-linejoin="round"/><circle cx="16.500" cy="12.250" r="1.750" fill="#fff" stroke="#1766c2" stroke-width="1.150"/></svg>
<svg style="left:1168px;top:436px" width="24" height="24" viewBox="0 0 24 24" ><circle cx="14.500" cy="9.500" r="7" fill="#fff" stroke="#1e8bcd" stroke-width="1.300"/><path d="M9.500 14.700L2.700 21.500" stroke="#1e8bcd" stroke-width="1.700"/></svg>
<div class="abs" style="left:0;top:578px;width:1200px;height:22px;background:#f0f0f0;border-top:1px solid #9c9c9c;box-shadow:inset 0 1px 0 #f8f8f8;box-sizing:border-box"></div>
<svg style="left:9px;top:581px" width="16" height="16" viewBox="0 0 16 16" fill="none" stroke="#9a9a9a"><path d="M.5 .5h15v15H3l-2.500-2.500z"/><path d="M3.500 .5v5h9v-5M3.500 15.500v-5h8v5"/><rect x="5" y="12.500" width="2" height="3" fill="#9a9a9a" stroke="none"/></svg>
<div class="ssep" style="left:30px"></div><div class="ssep" style="left:193px"></div><div class="ssep" style="left:372px"></div><div class="ssep" style="left:417px"></div><div class="ssep" style="left:562px"></div><div class="ssep" style="left:695px"></div><div class="ssep" style="left:764px"></div><div class="ssep" style="left:808px"></div><div class="ssep" style="left:837px"></div><div class="ssep" style="left:920px"></div><div class="ssep" style="left:1007px"></div><div class="ssep" style="left:1150px"></div>
<div class="st" style="left:39px">第 1 页，共 1 页</div><div class="st" style="left:202px">0 个单词，0 个字符</div><div class="st" style="left:426px">默认页面样式</div><div class="st" style="left:600px">中文 (简体)</div><div class="st" style="left:1159px">100%</div>
<svg style="left:772px;top:581px" width="32" height="17" viewBox="0 0 32 17" fill="none"><rect x="1.500" y="4.500" width="16" height="9" stroke="#1e8bcd"/><path d="M23.500 1.500h4M23.500 15.500h4M25.500 1.500v14" stroke="#333"/></svg>
<svg style="left:928px;top:582px" width="76" height="17" viewBox="0 0 76 17"><path d="M1.200 .6h8.300l3.300 3.300v11.600H1.200z" fill="#155fb5"/><path d="M19.500 1h8.500l3 3v11h-11.500zM28 1v3h3M32.500 1h8l3 3v11h-11zM40.500 1v3h3" fill="#fdfdfd" stroke="#555" stroke-linejoin="round"/><path d="M62 1v14M62 1h-8.500l-3 3v11H62M62 1h8.500l3 3v11H62M53.500 1v3h-3M70.500 1v3h3" fill="#fdfdfd" stroke="#555" stroke-linejoin="round"/></svg>
<svg style="left:1014px;top:581px" width="134" height="18" viewBox="0 0 134 18"><path d="M3 9h10M120 9h10M125 4v10" stroke="#222" stroke-width="2"/><path d="M18 9.500h97" stroke="#707070" stroke-width="1"/><path d="M18 10.500h97" stroke="#b5b5b5" stroke-width="1"/><path d="M28 7v5" stroke="#666" stroke-width="2"/><rect x="64.500" y="4.500" width="3.500" height="10" rx="1" fill="#ddd" stroke="#333"/></svg>
<svg style="left:0;top:590px" width="1200" height="10" viewBox="0 590 1200 10"><path d="M0 593.500A8 8 0 0 0 3 600H0z" fill="#fff"/><path d="M0 593.500A8 8 0 0 0 3 600" fill="none" stroke="#a2a2a2" stroke-width="1.300"/><path d="M1200 593.500A8 8 0 0 1 1197 600h3z" fill="#fff"/><path d="M1200 593.500A8 8 0 0 1 1197 600" fill="none" stroke="#a2a2a2" stroke-width="1.300"/></svg>
</body></html>
